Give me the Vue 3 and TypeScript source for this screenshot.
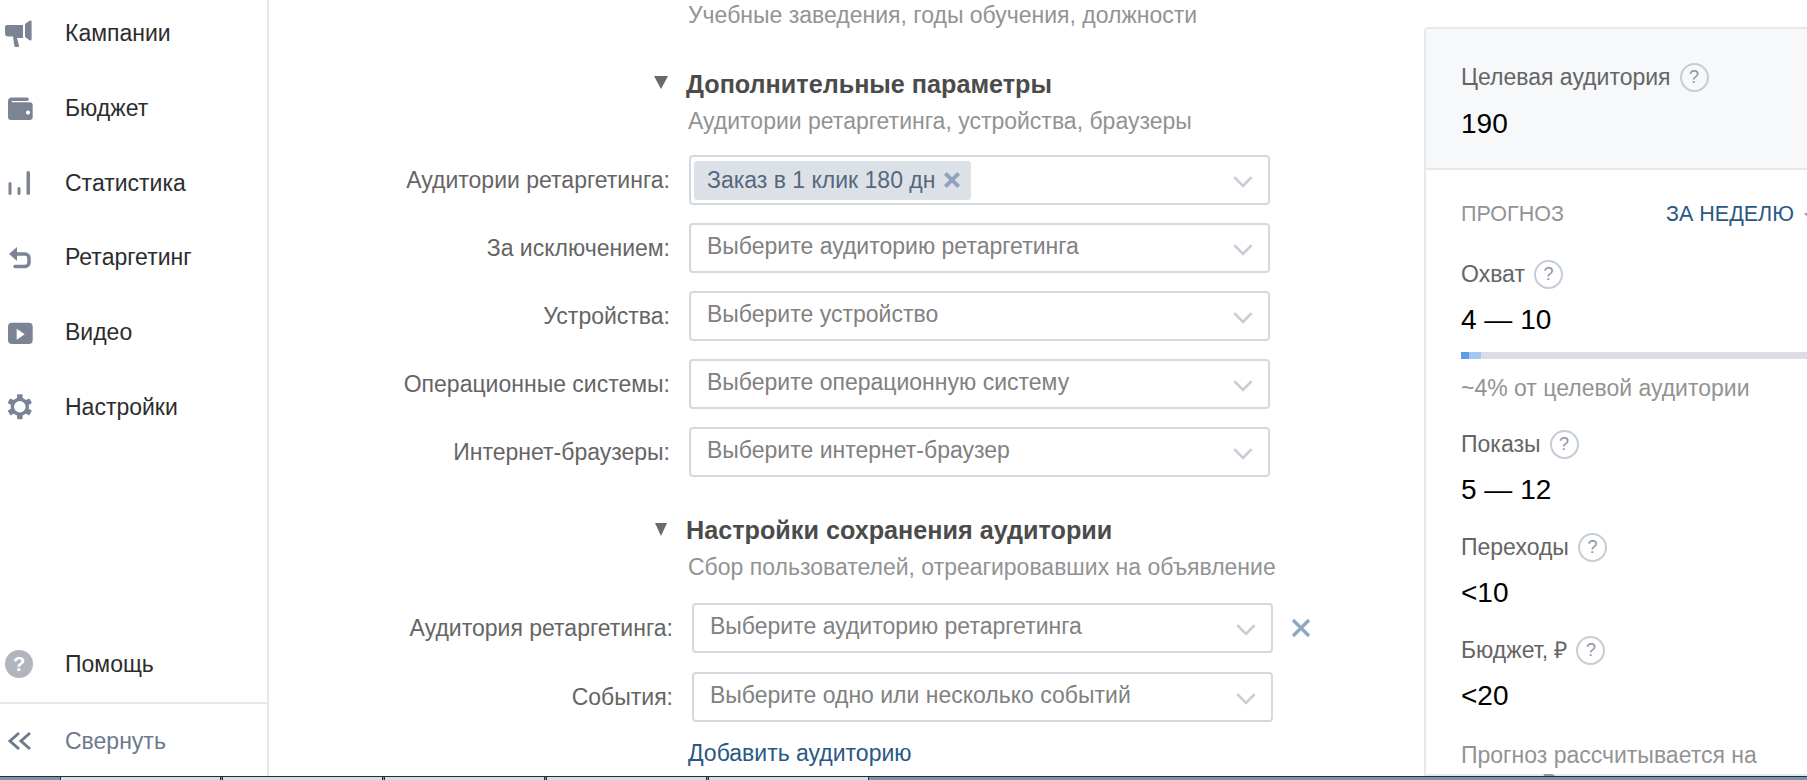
<script setup lang="ts">
const menu = [
  { key: 'megaphone', title: 'Кампании' },
  { key: 'wallet', title: 'Бюджет' },
  { key: 'stats', title: 'Статистика' },
  { key: 'retarget', title: 'Ретаргетинг' },
  { key: 'video', title: 'Видео' },
  { key: 'gear', title: 'Настройки' },
]

const extraRows = [
  { label: 'Аудитории ретаргетинга:', chip: 'Заказ в 1 клик 180 дн' },
  { label: 'За исключением:', text: 'Выберите аудиторию ретаргетинга' },
  { label: 'Устройства:', text: 'Выберите устройство' },
  { label: 'Операционные системы:', text: 'Выберите операционную систему' },
  { label: 'Интернет-браузеры:', text: 'Выберите интернет-браузер' },
]

const saveRows = [
  { label: 'Аудитория ретаргетинга:', text: 'Выберите аудиторию ретаргетинга', removable: true },
  { label: 'События:', text: 'Выберите одно или несколько событий' },
]

const metrics = [
  { label: 'Показы', value: '5 — 12' },
  { label: 'Переходы', value: '<10' },
  { label: 'Бюджет, ₽', value: '<20' },
]

const gearAngles = [0, 60, 120, 180, 240, 300]
const tabs = 5
</script>

<template>
  <div class="page">
    <div class="content">
      <aside class="sidebar">
        <a v-for="item in menu" :key="item.key" class="menu-item">
          <svg class="menu-icon" viewBox="0 0 30 30">
            <template v-if="item.key === 'megaphone'">
              <path d="M3 6h16v13h-6l2 7.500a1.200 1.200 0 0 1-1.200 1.500h-2a1.500 1.500 0 0 1-1.500-1.200L9 17.500H4a3 3 0 0 1-3-3V8a2 2 0 0 1 2-2z" />
              <path d="M21 5l4.600-3.200a1.200 1.200 0 0 1 2 .9v17.600a1.200 1.200 0 0 1-2 .9L21 18z" />
            </template>
            <template v-else-if="item.key === 'wallet'">
              <path fill-rule="evenodd" d="M8 3.500h15a1.800 1.800 0 0 1 0 3.600H8a1 1 0 0 0 0 1.200h17.700a3 3 0 0 1 3 3V23a3 3 0 0 1-3 3H7a3 3 0 0 1-3-3V7.500a4 4 0 0 1 4-4zM24 16.500a2 2 0 1 0 0 4.200 2 2 0 0 0 0-4.200z" />
            </template>
            <template v-else-if="item.key === 'stats'">
              <rect x="4.500" y="14" width="3" height="13" rx="1.500" />
              <rect x="13.500" y="19" width="3" height="8" rx="1.500" />
              <rect x="22.500" y="3" width="3.500" height="24" rx="1.700" />
            </template>
            <template v-else-if="item.key === 'retarget'">
              <path d="M5 11l8-7v14z" />
              <path class="line" d="M12 11h9a4 4 0 0 1 4 4v4.500a4 4 0 0 1-4 4H11" />
            </template>
            <template v-else-if="item.key === 'video'">
              <path fill-rule="evenodd" d="M8 4.700h16.700a4 4 0 0 1 4 4V22a4 4 0 0 1-4 4H8a4 4 0 0 1-4-4V8.700a4 4 0 0 1 4-4zM12.700 10.800v11l8-5.500z" />
            </template>
            <template v-else>
              <circle class="line" cx="15.800" cy="14.800" r="7.500" />
              <rect v-for="a in gearAngles" :key="a" x="13" y="2.300" width="5.600" height="5" rx="1" :transform="`rotate(${a} 15.800 14.800)`" />
            </template>
          </svg>
          <span>{{ item.title }}</span>
        </a>

        <div class="spacer"></div>

        <a class="menu-item">
          <svg class="menu-icon" viewBox="0 0 30 30">
            <circle class="help-circle" cx="15" cy="15" r="14" />
            <text x="15" y="22" text-anchor="middle" class="help-mark">?</text>
          </svg>
          <span>Помощь</span>
        </a>
        <a class="menu-item collapse">
          <svg class="menu-icon" viewBox="0 0 30 30">
            <path class="chev" d="M15 7l-9 8 9 8M26 7l-9 8 9 8" />
          </svg>
          <span>Свернуть</span>
        </a>
      </aside>

      <main class="form">
        <div class="sub first">Учебные заведения, годы обучения, должности</div>

        <div class="section-head">
          <i class="triangle"></i>
          <h3>Дополнительные параметры</h3>
        </div>
        <div class="sub">Аудитории ретаргетинга, устройства, браузеры</div>

        <div class="rows">
          <div v-for="row in extraRows" :key="row.label" class="row">
            <label>{{ row.label }}</label>
            <div class="select">
              <span v-if="row.chip" class="chip">
                {{ row.chip }}
                <svg class="chip-x" viewBox="0 0 18 18"><path d="M3 3l12 12M15 3L3 15" /></svg>
              </span>
              <span v-else class="placeholder">{{ row.text }}</span>
              <svg class="chevron" viewBox="0 0 20 12"><path d="M2 2l8 8 8-8" /></svg>
            </div>
          </div>
        </div>

        <div class="section-head save">
          <i class="triangle"></i>
          <h3>Настройки сохранения аудитории</h3>
        </div>
        <div class="sub sub-save">Сбор пользователей, отреагировавших на объявление</div>

        <div class="rows rows-save">
          <div v-for="row in saveRows" :key="row.label" class="row">
            <label>{{ row.label }}</label>
            <div class="select">
              <span class="placeholder">{{ row.text }}</span>
              <svg class="chevron" viewBox="0 0 20 12"><path d="M2 2l8 8 8-8" /></svg>
            </div>
            <svg v-if="row.removable" class="row-x" viewBox="0 0 20 20"><path d="M2 2l16 16M18 2L2 18" /></svg>
          </div>
        </div>

        <a class="add-link">Добавить аудиторию</a>
      </main>

      <section class="panel">
        <div class="panel-head">
          <div class="metric-label">Целевая аудитория <i class="hint">?</i></div>
          <div class="metric-value head-value">190</div>
        </div>
        <div class="panel-body">
          <div class="forecast">
            <span class="forecast-title">ПРОГНОЗ</span>
            <span class="forecast-period">ЗА НЕДЕЛЮ</span>
            <i class="period-arrow"></i>
          </div>

          <div class="metric-label reach">Охват <i class="hint">?</i></div>
          <div class="metric-value">4 — 10</div>
          <div class="bar">
            <div class="bar-light"><div class="bar-dark"></div></div>
          </div>
          <div class="note">~4% от целевой аудитории</div>

          <div v-for="m in metrics" :key="m.label" class="metric">
            <div class="metric-label">{{ m.label }} <i class="hint">?</i></div>
            <div class="metric-value">{{ m.value }}</div>
          </div>

          <div class="note forecast-note">Прогноз рассчитывается на основе Ваших настроек</div>
        </div>
      </section>
    </div>

    <footer class="taskbar">
      <span v-for="n in tabs" :key="n" class="tab"></span>
    </footer>
  </div>
</template>

<style scoped>
.page {
  width: 1807px;
  height: 780px;
  display: flex;
  flex-direction: column;
  overflow: hidden;
  background: #fff;
  font-family: "Liberation Sans", Arial, sans-serif;
}
.content {
  display: flex;
  height: 776px;
  overflow: hidden;
}
.sidebar {
  flex: none;
  box-sizing: border-box;
  width: 269px;
  height: 782px;
  margin-top: -3.5px;
  border-right: 2px solid #e7e8ec;
  display: flex;
  flex-direction: column;
}
.menu-item {
  flex: none;
  height: 74.7px;
  display: flex;
  align-items: center;
  padding-left: 4px;
  font-size: 23px;
  color: #2c2d2e;
}
.menu-icon {
  flex: none;
  width: 30px;
  height: 30px;
  margin-right: 31px;
  fill: #7b8495;
}
.menu-icon .line {
  fill: none;
  stroke: #7b8495;
  stroke-width: 3.5;
  stroke-linecap: round;
}
.menu-icon .chev {
  fill: none;
  stroke: #6f7a8b;
  stroke-width: 3;
}
.help-circle {
  fill: #b0b5c0;
}
.help-mark {
  fill: #fff;
  font-size: 20px;
  font-weight: bold;
  font-family: "Liberation Sans", Arial, sans-serif;
}
.spacer {
  flex: 1;
}
.collapse {
  border-top: 2px solid #e7e8ec;
  color: #6d7a8c;
}
.form {
  flex: none;
  width: 1155px;
}
.sub {
  margin: 7px 0 0 419px;
  font-size: 23px;
  line-height: 30px;
  color: #939393;
}
.sub.first {
  margin-top: 0;
}
.section-head {
  display: flex;
  margin: 39px 0 0 385px;
}
.section-head h3 {
  margin: 0;
  font-size: 25.2px;
  line-height: 30px;
  font-weight: bold;
  color: #4b4b4b;
}
.triangle {
  flex: none;
  width: 0;
  height: 0;
  margin: 7px 18px 0 0;
  border-left: 7.5px solid transparent;
  border-right: 7.5px solid transparent;
  border-top: 13px solid #6a6a6a;
}
.section-head.save {
  margin: 38px 0 0 386px;
}
.section-head.save .triangle {
  margin: 8px 19px 0 0;
  border-left-width: 6.5px;
  border-right-width: 6.5px;
}
.rows {
  margin-top: 19px;
  display: flex;
  flex-direction: column;
  gap: 18px;
}
.rows-save {
  margin-top: 21px;
  gap: 19px;
}
.row {
  display: grid;
  grid-template-columns: 400px 581px auto;
  column-gap: 20px;
  align-items: center;
  height: 50px;
}
.rows-save .row {
  grid-template-columns: 403px 581px auto;
}
.row label {
  margin-right: -1px;
  text-align: right;
  font-size: 23px;
  color: #656565;
}
.select {
  box-sizing: border-box;
  height: 50px;
  padding: 0 14px 4px 16px;
  display: flex;
  align-items: center;
  justify-content: space-between;
  border: 2px solid #d3d9de;
  border-radius: 4px;
  background: #fff;
}
.placeholder {
  font-size: 23px;
  color: #818181;
}
.chip {
  display: flex;
  align-items: center;
  height: 39px;
  margin: 4px 0 0 -13px;
  padding: 0 9px 0 13px;
  gap: 7px;
  border-radius: 3px;
  background: #dce1e8;
  font-size: 23px;
  color: #55677d;
}
.chip-x {
  width: 20px;
  height: 20px;
  fill: none;
  stroke: #8fa3ba;
  stroke-width: 3.5;
}
.chevron {
  flex: none;
  width: 22px;
  height: 13px;
  margin-top: 6px;
  fill: none;
  stroke: #c5cdd6;
  stroke-width: 2.5;
}
.row-x {
  width: 20px;
  height: 20px;
  margin-left: -2px;
  fill: none;
  stroke: #8fa9c2;
  stroke-width: 3.5;
}
.add-link {
  display: block;
  margin: 16px 0 0 419px;
  font-size: 23px;
  line-height: 30px;
  color: #2a5885;
}
.panel {
  flex: none;
  box-sizing: border-box;
  width: 420px;
  margin-top: 27px;
  border: 2px solid #e7e8ec;
  border-radius: 4px 0 0 0;
}
.panel-head {
  padding: 33px 0 26px 35px;
  background: #f7f8fa;
  border-bottom: 2px solid #e7e8ec;
}
.panel-body {
  padding: 31px 0 0 35px;
}
.metric-label {
  display: flex;
  align-items: center;
  gap: 9px;
  font-size: 23px;
  line-height: 30px;
  color: #656565;
}
.metric-value {
  margin-top: 13px;
  font-size: 28px;
  line-height: 36px;
  color: #000;
}
.head-value {
  margin-top: 14px;
}
.hint {
  box-sizing: border-box;
  width: 29px;
  height: 29px;
  border: 2px solid #c5cdd6;
  border-radius: 50%;
  text-align: center;
  font-style: normal;
  font-size: 18px;
  line-height: 25px;
  color: #8b96a3;
}
.forecast {
  display: flex;
  align-items: center;
  height: 26px;
  white-space: nowrap;
}
.forecast-title {
  width: 205px;
  font-size: 21.5px;
  color: #939393;
}
.forecast-period {
  font-size: 21.5px;
  color: #2a5885;
}
.period-arrow {
  margin: 4px 0 0 10px;
  border-left: 5px solid transparent;
  border-right: 5px solid transparent;
  border-top: 6px solid #8fa3ba;
}
.reach {
  margin-top: 32px;
}
.bar {
  width: 380px;
  height: 7px;
  margin-top: 14px;
  background: #dadee4;
}
.bar-light {
  width: 20px;
  height: 100%;
  background: #a6c8f0;
}
.bar-dark {
  width: 8px;
  height: 100%;
  background: #5c9ce6;
}
.note {
  margin-top: 14px;
  font-size: 23px;
  line-height: 30px;
  color: #939393;
}
.metric {
  margin-top: 26px;
}
.metric + .metric {
  margin-top: 24px;
}
.forecast-note {
  width: 320px;
  margin-top: 27px;
  line-height: 28px;
}
.taskbar {
  flex: none;
  box-sizing: border-box;
  height: 4px;
  padding-left: 60px;
  display: flex;
  gap: 1px;
  border-top: 1px solid #1f2f40;
  background: #7f93a8;
}
.tab {
  box-sizing: border-box;
  width: 161px;
  border: 1px solid #1f2f40;
  border-width: 0 1px;
  background: #d5dce3;
}
</style>

<style>
html, body {
  margin: 0;
  overflow: hidden;
}
</style>
